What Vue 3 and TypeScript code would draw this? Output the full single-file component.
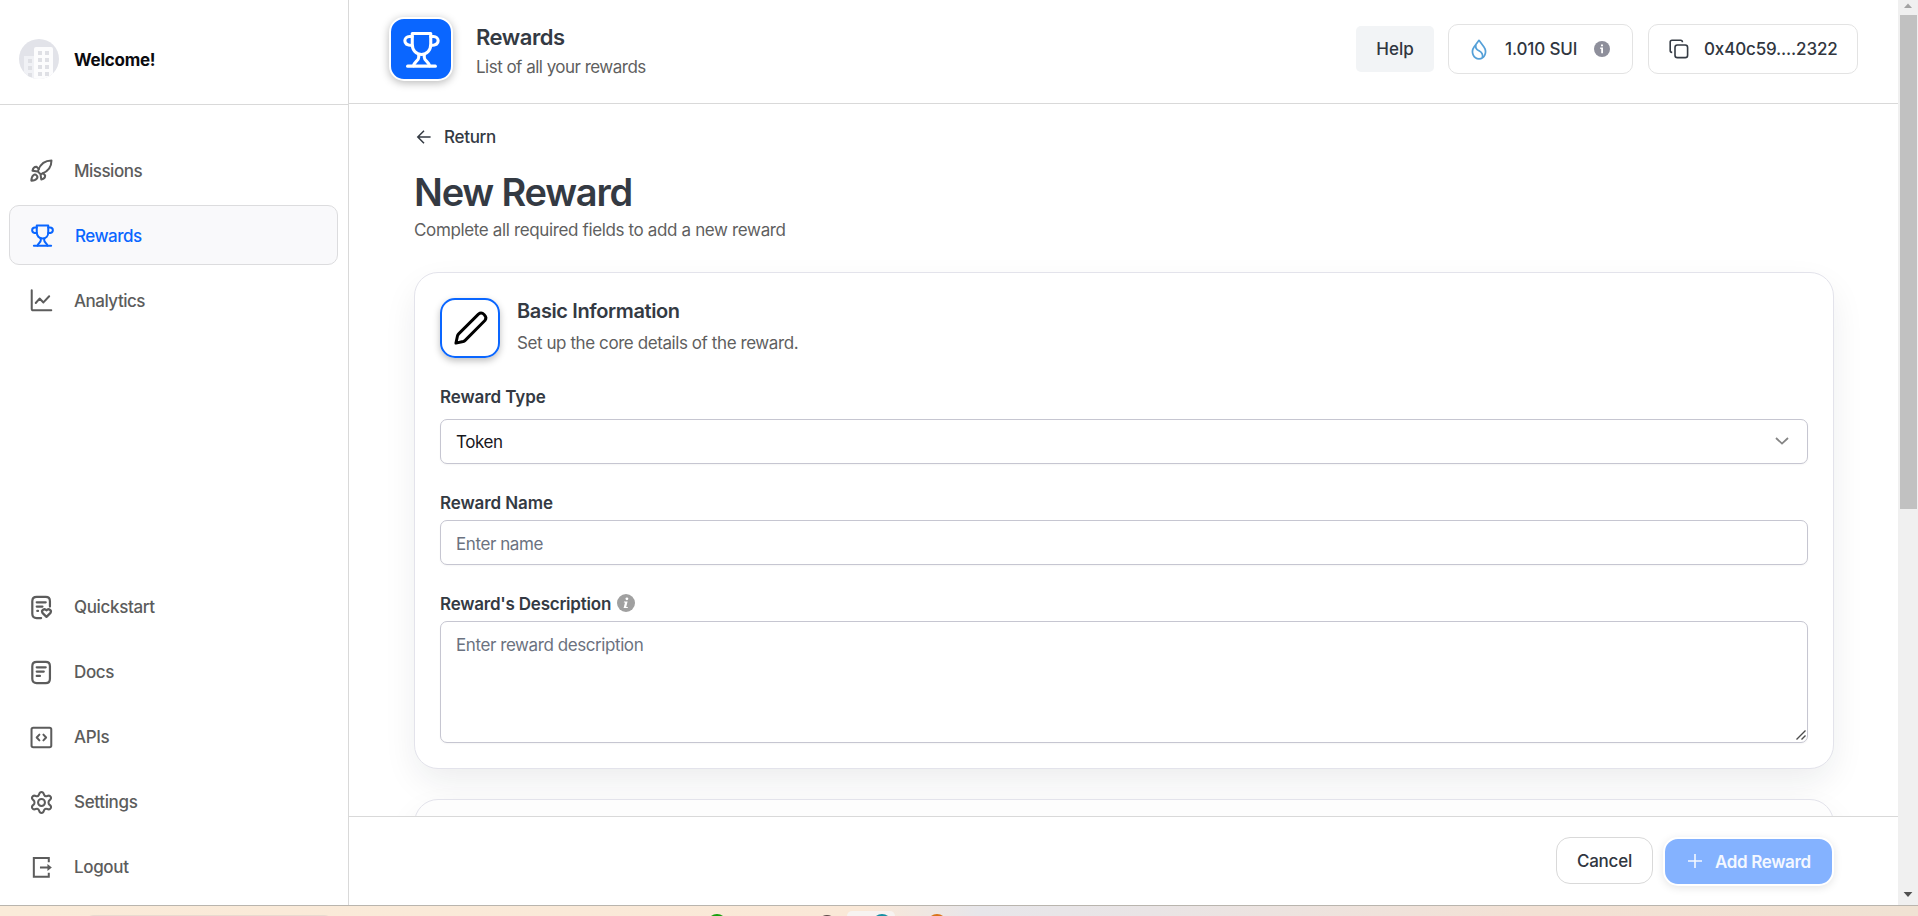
<script setup lang="ts">
import { ref } from 'vue'

interface NavItem {
  id: string
  label: string
  icon: string
}

const topNav: NavItem[] = [
  { id: 'missions', label: 'Missions', icon: 'rocket' },
  { id: 'rewards', label: 'Rewards', icon: 'trophy' },
  { id: 'analytics', label: 'Analytics', icon: 'chart' },
]

const bottomNav: NavItem[] = [
  { id: 'quickstart', label: 'Quickstart', icon: 'quickstart' },
  { id: 'docs', label: 'Docs', icon: 'docs' },
  { id: 'apis', label: 'APIs', icon: 'code' },
  { id: 'settings', label: 'Settings', icon: 'gear' },
  { id: 'logout', label: 'Logout', icon: 'logout' },
]

// 24x24 stroke icons
const icons: Record<string, string[]> = {
  rocket: [
    'M9.5 14.5 C8.6 13.6 8.2 12.6 8.6 11.6 C10.6 6.2 14.6 1.6 22.4 1.6 C22.4 9.4 17.8 13.4 12.4 15.4 C11.4 15.8 10.4 15.4 9.5 14.5 Z',
    'M9.2 10.4 L6.8 8.2 C4.6 8 3.2 9.6 2.6 12.2 L8 13',
    'M13.6 14.8 L15.8 17.2 C16 19.4 14.4 20.8 11.8 21.4 L11 16',
    'M6.9 17.1 C5 15.2 1.6 16.6 1.4 22.6 C7.4 22.4 8.8 19 6.9 17.1 Z',
  ],
  trophy: [
    'M6 1.6 H18 V8.6 C18 12.4 15.6 15.2 12 15.2 C8.4 15.2 6 12.4 6 8.6 Z',
    'M6 3.6 H4.2 C2.4 3.6 1.2 4.8 1.2 6.4 C1.2 8.6 3 9.4 6 9.4',
    'M18 3.6 H19.8 C21.6 3.6 22.8 4.8 22.8 6.4 C22.8 8.6 21 9.4 18 9.4',
    'M10.2 15.2 V17 C10.2 19.4 7.2 20 6.8 22.6',
    'M13.8 15.2 V17 C13.8 19.4 16.8 20 17.2 22.6',
    'M3 22.8 H21',
  ],
  chart: ['M1.8 1.2 V20.6 Q1.8 22.2 3.4 22.2 H22.2', 'M6 14.6 L10 10 L14 14 L20 7.6'],
  quickstart: [
    'M11.6 23 H7 Q2.4 23 2.4 18.4 V5.4 Q2.4 1 7 1 H16.4 Q20.8 1 20.8 5.4 V11',
    'M7 6.6 H16.4',
    'M7 11 H13',
    'M7.6 15.6 H8.4',
    'M17.2 21.8 L13 17.6 C11.4 15 15 12.4 17.2 15 C19.4 12.4 23 15 21.4 17.6 Z',
  ],
  docs: [
    'M7 1 H16.4 Q20.8 1 20.8 5.4 V18.4 Q20.8 23 16.4 23 H7 Q2.4 23 2.4 18.4 V5.4 Q2.4 1 7 1 Z',
    'M7 6.6 H16.4',
    'M7 11 H14.4',
    'M7 15.6 H10.4',
  ],
  code: [
    'M3.4 1.8 H20.4 Q22.2 1.8 22.2 3.6 V20.4 Q22.2 22.2 20.4 22.2 H3.4 Q1.6 22.2 1.6 20.4 V3.6 Q1.6 1.8 3.4 1.8 Z',
    'M9.8 9 L7 12 L9.8 15',
    'M14 9 L16.8 12 L14 15',
  ],
  gear: [
    'M12 1 C14.2 1 14.4 3.2 14.8 4.2 C15.4 5.4 16.6 5.8 18 5.2 C19.4 4.6 20.6 4.4 21.6 6 C22.8 8.2 21.2 9 20.2 9.8 C19 10.8 19 13.2 20.2 14.2 C21.2 15 22.8 15.8 21.6 18 C20.6 19.6 19.4 19.4 18 18.8 C16.6 18.2 15.4 18.6 14.8 19.8 C14.4 20.8 14.2 23 12 23 C9.8 23 9.6 20.8 9.2 19.8 C8.6 18.6 7.4 18.2 6 18.8 C4.6 19.4 3.4 19.6 2.4 18 C1.2 15.8 2.8 15 3.8 14.2 C5 13.2 5 10.8 3.8 9.8 C2.8 9 1.2 8.2 2.4 6 C3.4 4.4 4.6 4.6 6 5.2 C7.4 5.8 8.6 5.4 9.2 4.2 C9.6 3.2 9.8 1 12 1 Z',
    'M12 8.4 A3.6 3.6 0 1 1 12 15.6 A3.6 3.6 0 1 1 12 8.4 Z',
  ],
  logout: ['M19.6 6.4 V2.2 H4 V21.6 H19.6 V17.4', 'M10.4 12 H20'],
}

const activeItem = ref('rewards')
const rewardType = ref('Token')
const rewardName = ref('')
const rewardDescription = ref('')
</script>

<template>
  <div class="screen">
    <div class="browser">
      <aside class="sidebar">
        <div class="profile">
          <svg class="avatar" viewBox="0 0 40 40">
            <defs>
              <clipPath id="avatar-clip"><circle cx="20" cy="20" r="20" /></clipPath>
            </defs>
            <g clip-path="url(#avatar-clip)">
              <rect width="40" height="40" fill="#e2e3e9" />
              <path d="M5 17 H15 V40 H5 Z" fill="#f0f1f5" />
              <path d="M15 10 Q15 8 17 8 H32 Q34 8 34 10 V40 H15 Z" fill="#fcfcfd" />
              <g fill="#dfe0e5">
                <rect v-for="n in 4" :key="'a' + n" x="19" :y="5 + n * 7" width="4" height="4" />
                <rect v-for="n in 4" :key="'b' + n" x="26" :y="5 + n * 7" width="4" height="4" />
                <rect v-for="n in 3" :key="'c' + n" x="9" :y="13 + n * 7" width="4" height="4" />
              </g>
            </g>
          </svg>
          <span class="welcome">Welcome!</span>
        </div>
        <nav class="nav nav-top">
          <a
            v-for="item in topNav"
            :key="item.id"
            class="nav-item"
            :class="{ active: activeItem === item.id }"
            @click="activeItem = item.id"
          >
            <svg class="nav-icon" viewBox="0 0 24 24">
              <path v-for="d in icons[item.icon]" :key="d" :d="d" />
            </svg>
            <span>{{ item.label }}</span>
          </a>
        </nav>
        <nav class="nav nav-bottom">
          <a v-for="item in bottomNav" :key="item.id" class="nav-item">
            <svg class="nav-icon" :class="'icon-' + item.icon" viewBox="0 0 24 24">
              <path v-for="d in icons[item.icon]" :key="d" :d="d" />
              <path v-if="item.icon === 'logout'" class="arrow-head" d="M18.2 8.4 L22.8 12 L18.2 15.6 Z" />
            </svg>
            <span>{{ item.label }}</span>
          </a>
        </nav>
      </aside>

      <main class="main">
        <header class="topbar">
          <div class="page-icon">
            <svg viewBox="0 0 24 24">
              <path v-for="d in icons.trophy" :key="d" :d="d" />
            </svg>
          </div>
          <div class="page-heading">
            <div class="page-title">Rewards</div>
            <div class="page-subtitle">List of all your rewards</div>
          </div>
          <button type="button" class="help">Help</button>
          <div class="pill balance">
            <svg class="drop" viewBox="0 0 16 22">
              <path d="M8 1.4 L13.2 8.4 C17 14 13.6 20.8 8 20.8 C2.4 20.8 -1 14 2.8 8.4 Z" />
              <path d="M4.8 6.2 C3.8 9.6 5.4 11 8 12.4 C11.4 14.2 12.4 15.8 11.6 19.4" />
            </svg>
            <span class="amount">1.010 SUI</span>
            <svg class="info" viewBox="0 0 16 16">
              <circle cx="8" cy="8" r="8" fill="#8e8f9b" />
              <path d="M7 3.4 H9 V5.2 H7 Z M6.2 6.6 H9 V12.2 H7.2 V8 H6.2 Z" fill="#fff" />
            </svg>
          </div>
          <div class="pill wallet">
            <svg class="copy" viewBox="0 0 20 20">
              <rect x="6" y="6" width="12.6" height="12.6" rx="2.4" />
              <path d="M3.2 13.4 H3 Q1.2 13.4 1.2 11.6 V3 Q1.2 1.2 3 1.2 H11.6 Q13.4 1.2 13.4 3 V3.2" />
            </svg>
            <span class="address">0x40c59....2322</span>
          </div>
        </header>

        <section class="content">
          <a class="return">
            <svg viewBox="0 0 14 14">
              <path d="M13.6 7 H0.8 M7 0.8 L0.8 7 L7 13.2" />
            </svg>
            <span>Return</span>
          </a>
          <h1>New Reward</h1>
          <p class="lead">Complete all required fields to add a new reward</p>

          <form class="card" @submit.prevent>
            <div class="card-head">
              <div class="card-icon">
                <svg viewBox="0 0 36 36">
                  <path
                    d="M3 33 L4.6 25.6 Q4.9 24.4 5.8 23.5 L26.2 3.2 Q29.2 0.8 32.2 3.8 Q35.2 6.8 32.8 9.8 L12.5 30.2 Q11.6 31.1 10.4 31.4 Z"
                  />
                </svg>
              </div>
              <div>
                <div class="card-title">Basic Information</div>
                <div class="card-subtitle">Set up the core details of the reward.</div>
              </div>
            </div>

            <label class="field-label type-label">Reward Type</label>
            <div class="control select">
              <span>{{ rewardType }}</span>
              <svg viewBox="0 0 14 8"><path d="M1 1 L7 6.6 L13 1" /></svg>
            </div>

            <label class="field-label name-label">Reward Name</label>
            <input v-model="rewardName" class="control" type="text" placeholder="Enter name" />

            <label class="field-label desc-label">
              <span>Reward's Description</span>
              <svg viewBox="0 0 18 18">
                <circle cx="9" cy="9" r="9" fill="#a0a0a0" />
                <circle cx="9.9" cy="4.8" r="1.4" fill="#fff" />
                <path d="M7 7.4 H10.6 L9.2 12.9 H10.8 V14.1 H6.6 L8 8.6 H6.8 Z" fill="#fff" />
              </svg>
            </label>
            <div class="area-wrap">
              <textarea
                v-model="rewardDescription"
                class="control area"
                placeholder="Enter reward description"
              ></textarea>
              <svg class="grip" viewBox="0 0 10 10">
                <path d="M0.5 9.5 L9.5 0.5 M5.5 9.5 L9.5 5.5" />
              </svg>
            </div>
          </form>

          <div class="card next-card"></div>
        </section>

        <footer class="actions">
          <button type="button" class="cancel">Cancel</button>
          <button type="button" class="add">
            <svg viewBox="0 0 14 14"><path d="M7 0 V14 M0 7 H14" /></svg>
            <span>Add Reward</span>
          </button>
        </footer>
      </main>

      <div class="scrollbar">
        <svg viewBox="0 0 20 15"><path d="M6 8 L10 3.4 L14 8 Z" fill="#a3a3a3" /></svg>
        <div class="thumb"></div>
        <svg class="down" viewBox="0 0 20 15"><path d="M5.6 2 L14.4 2 L10 7 Z" fill="#505050" /></svg>
      </div>
    </div>

    <div class="taskbar">
      <svg width="1918" height="10" viewBox="0 0 1918 10">
        <rect x="84" y="9" width="250" height="20" rx="10" fill="#e8dbcf" />
        <rect x="847" y="5" width="48" height="40" rx="5" fill="#f7f3f1" />
        <circle cx="717" cy="18" r="10" fill="#17a00e" />
        <circle cx="827" cy="18.5" r="9.5" fill="#5d4a48" />
        <circle cx="882" cy="18" r="10" fill="#168fa3" />
        <circle cx="937" cy="18" r="10" fill="#d9741a" />
      </svg>
    </div>
  </div>
</template>

<style>
body {
  margin: 0;
  overflow: hidden;
}
</style>

<style scoped>
* {
  box-sizing: border-box;
}

.screen {
  width: 1918px;
  height: 916px;
  display: flex;
  flex-direction: column;
  background: #fff;
  color: #343a43;
  font-family: Inter, 'Liberation Sans', sans-serif;
  font-size: 17px;
  line-height: 24px;
}

button,
input,
textarea {
  font: inherit;
}

svg {
  display: block;
  flex: none;
  overflow: visible;
}

.browser {
  height: 905px;
  display: flex;
}

/* Sidebar */
.sidebar {
  width: 349px;
  border-right: 1px solid #d9d9d9;
  display: flex;
  flex-direction: column;
}

.profile {
  height: 105px;
  padding: 14px 0 0 19px;
  border-bottom: 1px solid #d9d9d9;
  display: flex;
  align-items: center;
  gap: 15px;
}

.avatar {
  width: 40px;
  height: 40px;
}

.welcome {
  padding-top: 2px;
  color: #0b0b0f;
  font-weight: 700;
  letter-spacing: -0.25px;
}

.nav {
  padding: 35px 10px 0 9px;
  display: flex;
  flex-direction: column;
  gap: 5px;
}

.nav-bottom {
  margin-top: auto;
  padding: 0 10px 8px 9px;
}

.nav-item {
  height: 60px;
  padding-left: 21px;
  display: flex;
  align-items: center;
  gap: 21px;
  color: #5c5c5c;
  font-weight: 500;
  letter-spacing: -0.35px;
}

.nav-top .nav-item {
  letter-spacing: -0.5px;
}

.nav-top .nav-item span {
  padding-top: 2px;
}

.nav-item.active {
  background: #f9f9fb;
  border: 1px solid #dcdcde;
  border-radius: 10px;
  color: #0a66ff;
}

.nav-icon {
  width: 23px;
  height: 23px;
  fill: none;
  stroke: currentColor;
  stroke-width: 2.1;
  stroke-linejoin: round;
  stroke-linecap: round;
}

.icon-quickstart,
.icon-docs {
  stroke-width: 2.3;
}

.icon-logout {
  stroke-linecap: butt;
  stroke-linejoin: miter;
}

.arrow-head {
  fill: currentColor;
  stroke: none;
}

/* Main column */
.main {
  width: 1549px;
  display: flex;
  flex-direction: column;
}

.topbar {
  height: 104px;
  padding: 0 40px 5px;
  border-bottom: 1px solid #d9d9d9;
  display: flex;
  align-items: center;
}

.page-icon {
  width: 64px;
  height: 64px;
  border: 2px solid #fff;
  border-radius: 15px;
  background: #0a66ff;
  box-shadow: 0 2px 9px rgba(0, 0, 0, 0.28);
  display: flex;
  align-items: center;
  justify-content: center;
}

.page-icon svg {
  width: 37px;
  height: 37px;
  fill: none;
  stroke: #fff;
  stroke-width: 2;
  stroke-linecap: round;
  stroke-linejoin: round;
}

.page-heading {
  margin: 5px auto 0 23px;
}

.page-title {
  font-size: 22px;
  font-weight: 600;
  line-height: 28px;
  letter-spacing: -0.45px;
}

.page-subtitle {
  margin-top: 2px;
  color: #5f5f5f;
  line-height: 28px;
  letter-spacing: -0.52px;
}

.help {
  width: 78px;
  height: 46px;
  padding: 0;
  border: 0;
  border-radius: 5px;
  background: #f2f4f6;
  color: #30363f;
  font-weight: 500;
}

.pill {
  height: 50px;
  margin-left: 15px;
  border: 1px solid #e3e3e3;
  border-radius: 10px;
  display: flex;
  align-items: center;
  color: #30363f;
  font-weight: 500;
}

.balance {
  width: 185px;
  margin-left: 14px;
  padding-left: 22px;
}

.drop {
  width: 16px;
  height: 21px;
  margin-right: 18px;
  fill: none;
  stroke: #55a0d8;
  stroke-width: 1.8;
  stroke-linejoin: round;
}

.amount {
  width: 89px;
  letter-spacing: -0.15px;
}

.info {
  width: 16px;
  height: 16px;
}

.wallet {
  width: 210px;
  padding-left: 20px;
}

.copy {
  width: 20px;
  height: 20px;
  margin-right: 15px;
  fill: none;
  stroke: #343a43;
  stroke-width: 1.6;
}

.address {
  letter-spacing: -0.15px;
}

.content {
  height: 712px;
  padding: 21px 64px 0 65px;
  overflow: hidden;
}

.return {
  height: 24px;
  padding-left: 3px;
  display: flex;
  align-items: center;
  gap: 13px;
  font-weight: 500;
  letter-spacing: -0.3px;
}

.return svg {
  width: 14px;
  height: 14px;
  fill: none;
  stroke: #343a43;
  stroke-width: 1.5;
}

h1 {
  margin: 17px 0 0;
  font-size: 38px;
  font-weight: 600;
  line-height: 52px;
  letter-spacing: -1.2px;
}

.lead {
  margin: 0;
  height: 54px;
  color: #5f5f5f;
  letter-spacing: -0.36px;
}

.card {
  height: 497px;
  padding: 25px;
  border: 1px solid #e3e3eb;
  border-radius: 24px;
  background: #fff;
  box-shadow: 0 14px 36px -4px rgba(20, 30, 40, 0.09);
}

.next-card {
  margin-top: 30px;
  background: #fdfdfd;
}

.card-head {
  display: flex;
  gap: 17px;
}

.card-icon {
  width: 60px;
  height: 60px;
  border: 2px solid #0a66ff;
  border-radius: 15px;
  box-shadow: 0 3px 7px rgba(0, 0, 0, 0.25);
  display: flex;
  align-items: center;
  justify-content: center;
}

.card-icon svg {
  width: 35px;
  height: 35px;
  fill: none;
  stroke: #000;
  stroke-width: 3;
  stroke-linejoin: round;
}

.card-title {
  font-size: 20px;
  font-weight: 600;
  line-height: 26px;
  letter-spacing: -0.38px;
}

.card-subtitle {
  margin-top: 7px;
  color: #5f5f5f;
  letter-spacing: -0.42px;
}

.field-label {
  height: 24px;
  display: flex;
  align-items: center;
  gap: 6px;
  font-weight: 600;
  letter-spacing: -0.1px;
}

.field-label svg {
  width: 18px;
  height: 18px;
  margin-top: -2px;
}

.type-label {
  margin: 27px 0 10px;
}

.name-label,
.desc-label {
  margin: 27px 0 5px;
}

.desc-label {
  letter-spacing: -0.22px;
}

.control {
  display: block;
  width: 100%;
  height: 45px;
  padding: 2px 15px 0;
  border: 1px solid #c6c6d1;
  border-radius: 7px;
  outline: 0;
  background: #fff;
  color: #17171c;
  letter-spacing: -0.42px;
  box-shadow: 0 1px 2px rgba(0, 0, 0, 0.04);
}

.control::placeholder {
  color: #6b7280;
  opacity: 1;
}

.select {
  padding-top: 1px;
  display: flex;
  align-items: center;
  justify-content: space-between;
}

.select svg {
  width: 14px;
  height: 8px;
  margin: -2px 3px 0 0;
  fill: none;
  stroke: #858585;
  stroke-width: 1.8;
}

.area-wrap {
  position: relative;
}

.area {
  height: 122px;
  padding-top: 11px;
  resize: none;
}

.grip {
  position: absolute;
  right: 2px;
  bottom: 3px;
  width: 10px;
  height: 10px;
  stroke: #4b4b4b;
  stroke-width: 1.4;
}

.actions {
  flex: 1;
  padding: 0 64px 2px 0;
  border-top: 1px solid #d9d9d9;
  background: #fff;
  display: flex;
  align-items: center;
  justify-content: flex-end;
}

.cancel {
  width: 97px;
  height: 47px;
  padding: 2px 0 0;
  border: 1px solid #d9d9d9;
  border-radius: 14px;
  background: #fff;
  color: #30363f;
  font-weight: 500;
  letter-spacing: -0.2px;
}

.add {
  width: 171px;
  height: 49px;
  margin: 2px 0 0 10px;
  padding: 0 0 0 23px;
  border: 2px solid #fff;
  border-radius: 15px;
  background: #84b2ff;
  box-shadow: 0 2px 8px rgba(0, 0, 0, 0.1);
  color: #f4f8ff;
  font-weight: 600;
  letter-spacing: -0.35px;
  display: flex;
  align-items: center;
  gap: 13px;
}

.add span {
  padding-top: 2px;
}

.add svg {
  width: 14px;
  height: 14px;
  stroke: #f4f8ff;
  stroke-width: 1.6;
}

/* Window edge */
.scrollbar {
  width: 20px;
  background: #f0f0f0;
  display: flex;
  flex-direction: column;
}

.scrollbar svg {
  width: 20px;
  height: 15px;
}

.thumb {
  width: 17px;
  height: 494px;
  margin-left: 2px;
  background: #c1c1c1;
}

.scrollbar .down {
  margin-top: auto;
}

.taskbar {
  height: 11px;
  border-top: 1px solid #b9b5ae;
  background: linear-gradient(90deg, #faebd9 0%, #fae8d7 45%, #e7e6ea 51%, #e9e4e5 60%, #f3e1d4 80%, #f0e2d3 100%);
  overflow: hidden;
}
</style>
